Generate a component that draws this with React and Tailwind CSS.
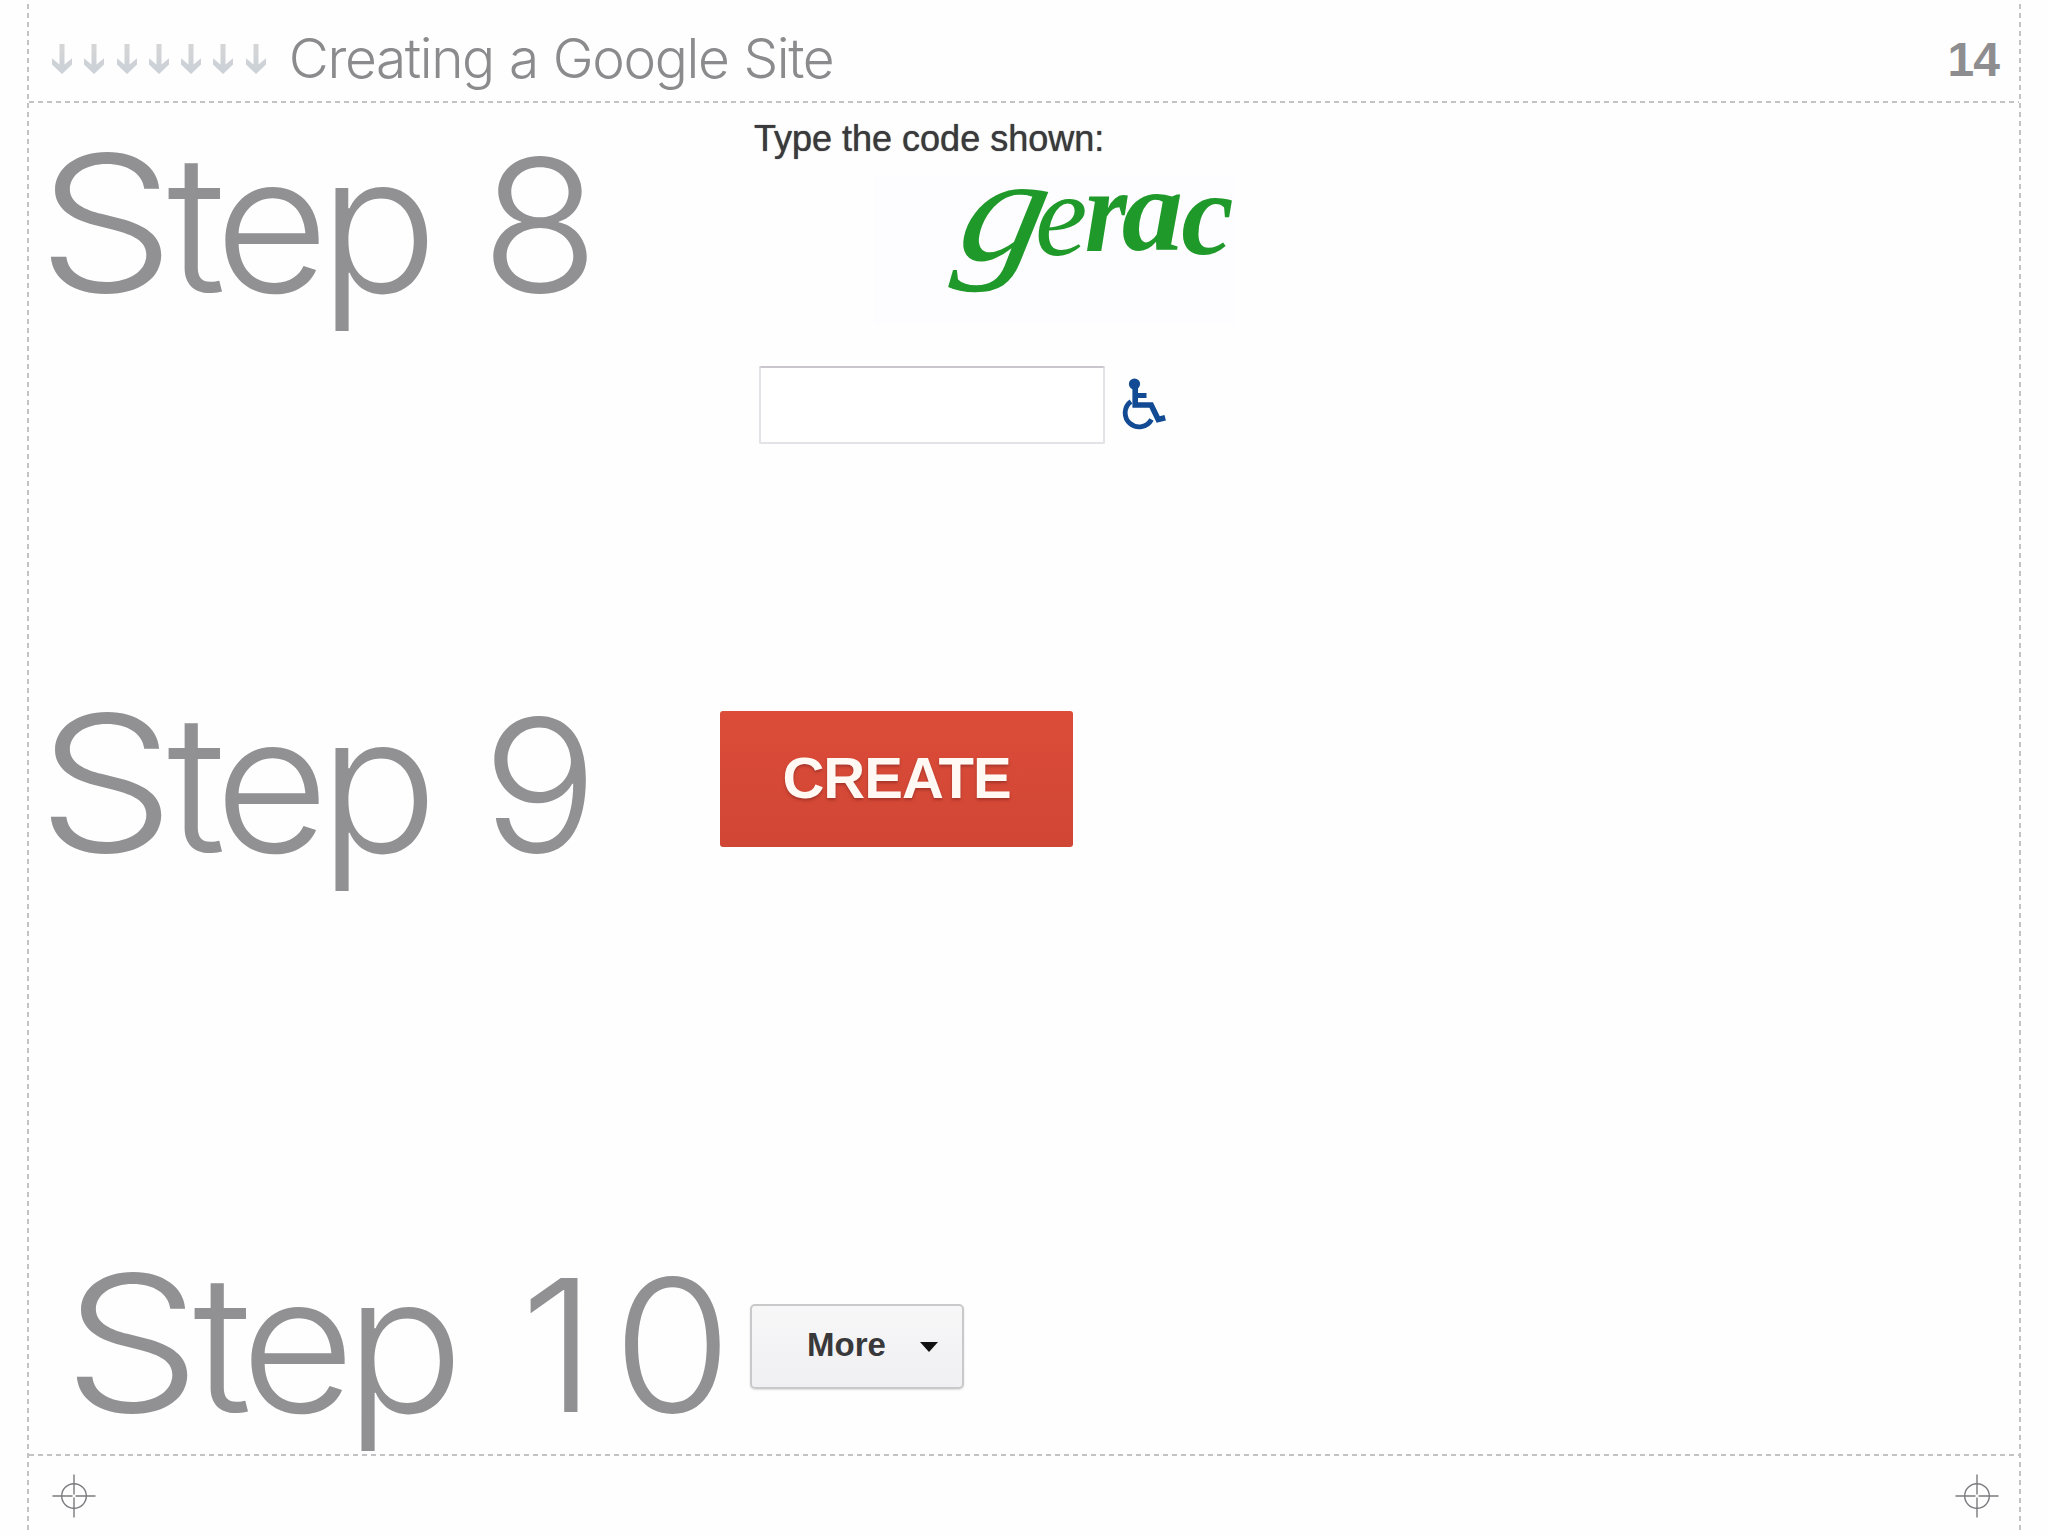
import { clsx } from "clsx";

const ARROWS = [0, 1, 2, 3, 4, 5, 6];

const CAPTCHA = [
	{
		char: "g",
		style: "translate-y-[10px] -skew-x-[10deg] scale-x-[1.46] scale-y-[1.28] mr-[9px]",
	},
	{ char: "e", style: "translate-y-[5px]" },
	{ char: "r", style: "translate-y-[1px] -ml-[4px] scale-x-[0.92] font-bold" },
	{ char: "a", style: "-ml-[6px] scale-x-[1.04] font-bold" },
	{ char: "c", style: "translate-y-[4px] -ml-[1px] font-bold" },
];

function DashX() {
	return (
		<div className="h-[2px] w-full shrink-0 bg-[repeating-linear-gradient(to_right,#c3c3c6_0_5px,transparent_5px_9px)]" />
	);
}

function DashY() {
	return (
		<div className="mt-[4px] mb-[6px] w-[2px] shrink-0 bg-[repeating-linear-gradient(to_bottom,#c3c3c6_0_5px,transparent_5px_9px)]" />
	);
}

function DownArrow() {
	return (
		<svg width="20" height="30" viewBox="0 0 20 30">
			<defs>
				<linearGradient id="arrow" x1="0" y1="0" x2="0" y2="1">
					<stop offset="0" stopColor="#d5d5d6" />
					<stop offset="1" stopColor="#cad1d7" />
				</linearGradient>
			</defs>
			<path
				fill="url(#arrow)"
				d="M7.500 0h5v20.500L20 14.300v6.200L10 30 0 20.500v-6.200l7.500 6.200z"
			/>
		</svg>
	);
}

function Crosshair() {
	return (
		<svg
			width="44"
			height="44"
			viewBox="0 0 44 44"
			fill="none"
			stroke="#7b7b7f"
			strokeWidth="1.4"
		>
			<circle cx="22" cy="22" r="12.3" />
			<path d="M22 .5v20M22 23.5v20M.5 22h20M23.5 22h20" />
		</svg>
	);
}

function Wheelchair() {
	return (
		<svg width="46" height="52" viewBox="0 0 46 52" fill="none">
			<circle cx="12.500" cy="6" r="5.600" fill="#124a94" />
			<path
				d="M13.200 10v17h16l7 14.500 7-1.800"
				stroke="#124a94"
				strokeWidth="5.600"
			/>
			<path d="M14 17.500h10.500" stroke="#124a94" strokeWidth="5" />
			<path
				d="M9 23.500a14 14 0 1 0 20.500 18"
				stroke="#124a94"
				strokeWidth="4.800"
			/>
		</svg>
	);
}

function Step({ number, className, numberClass, children }) {
	return (
		<section className="flex shrink-0 grow basis-0 items-start">
			<h2
				className={clsx(
					"w-[690px] shrink-0 whitespace-nowrap pt-[25px] font-['Inter',sans-serif] text-[190px] font-[300] leading-[190px] tracking-[-6px] text-[#919194]",
					className
				)}
			>
				<span className="mr-[16px] inline-block origin-left scale-x-[1.15]">
					S
				</span>
				<span className="inline-block origin-left scale-x-[1.04] tracking-[-9.5px]">
					tep
				</span>{" "}
				<span
					className={clsx(
						"inline-block origin-left scale-x-[1.05] text-[184px]",
						numberClass
					)}
				>
					{number}
				</span>
			</h2>
			{children}
		</section>
	);
}

function App() {
	return (
		<div className="flex h-[1536px] w-[2048px] overflow-hidden bg-[#fefefe] pl-[27px] pr-[27px]">
			<DashY />
			<main className="flex min-w-0 grow flex-col">
				<header className="flex h-[101px] shrink-0 items-start pl-[23px] pr-[20px]">
					<div className="mt-[44px] flex gap-[12.3px]">
						{ARROWS.map((arrow) => (
							<DownArrow key={arrow} />
						))}
					</div>
					<h1 className="ml-[23px] mt-[31px] grow whitespace-nowrap font-['Inter',sans-serif] text-[55px] font-[300] leading-[55px] tracking-[-1.4px] text-[#8b8b8d] [word-spacing:1px]">
						Creating a Google Site
					</h1>
					<span className="mt-[35px] font-['Liberation_Sans',sans-serif] text-[48px] font-bold leading-[50px] tracking-[-1px] text-[#8e8e90]">
						14
					</span>
				</header>
				<DashX />
				<div className="grid h-[1351px] shrink-0 grid-rows-[560px_560px_231px]">
					<Step number={8} className="pl-[8px]" numberClass="ml-[15px]">
						<div className="flex flex-col pl-[35px] pt-[15px]">
							<label
								htmlFor="code"
								className="font-['Liberation_Sans',sans-serif] text-[36px] leading-[42px] text-[#3a3a3c] [text-shadow:0_0_1px_#3a3a3c]"
							>
								Type the code shown:
							</label>
							<div className="ml-[120px] mt-[15px] flex h-[150px] w-[362px] bg-[#fdfcfe] pl-[93px] font-['Liberation_Serif',serif] text-[118px] italic leading-[72px] text-[#1f9a2a]">
								{CAPTCHA.map(({ char, style }) => (
									<span key={char} className={clsx("inline-block", style)}>
										{char}
									</span>
								))}
							</div>
							<div className="ml-[5px] mt-[41px] flex items-start gap-[17px]">
								<input
									id="code"
									type="text"
									className="h-[78px] w-[346px] rounded-[2px] border-2 border-[#e4e1e7] border-t-[#c9c7cb] bg-white"
								/>
								<div className="mt-[12px]">
									<Wheelchair />
								</div>
							</div>
						</div>
					</Step>
					<Step number={9} className="pl-[8px]" numberClass="ml-[16px]">
						<button className="ml-[1px] mt-[48px] h-[136px] w-[353px] rounded-[3px] bg-linear-to-b from-[#dc4c38] to-[#d04635] pb-[2px] font-['Liberation_Sans',sans-serif] text-[58px] font-bold leading-[134px] tracking-[-1px] text-[#fff8f3] [text-shadow:0_2px_3px_#a5352a]">
							CREATE
						</button>
					</Step>
					<Step
						number={10}
						className="pl-[34px]"
						numberClass="ml-[28px] tracking-[16px]"
					>
						<button className="ml-[31px] mt-[81px] flex h-[85px] w-[214px] items-center rounded-[5px] border-2 border-[#c9c9cb] bg-linear-to-b from-[#f7f7f8] to-[#f0eff1] pb-1 pl-[55px] font-['Liberation_Sans',sans-serif] text-[33px] font-bold text-[#39393b] shadow-[0_1px_2px_#ddd]">
							More
							<svg className="ml-[34px] mt-1" width="18" height="10">
								<path d="M0 0h18L9 10z" fill="#111" />
							</svg>
						</button>
					</Step>
				</div>
				<DashX />
				<footer className="flex items-start justify-between pl-[23px] pr-[20px] pt-[18px]">
					<Crosshair />
					<Crosshair />
				</footer>
			</main>
			<DashY />
		</div>
	);
}

export default App;
